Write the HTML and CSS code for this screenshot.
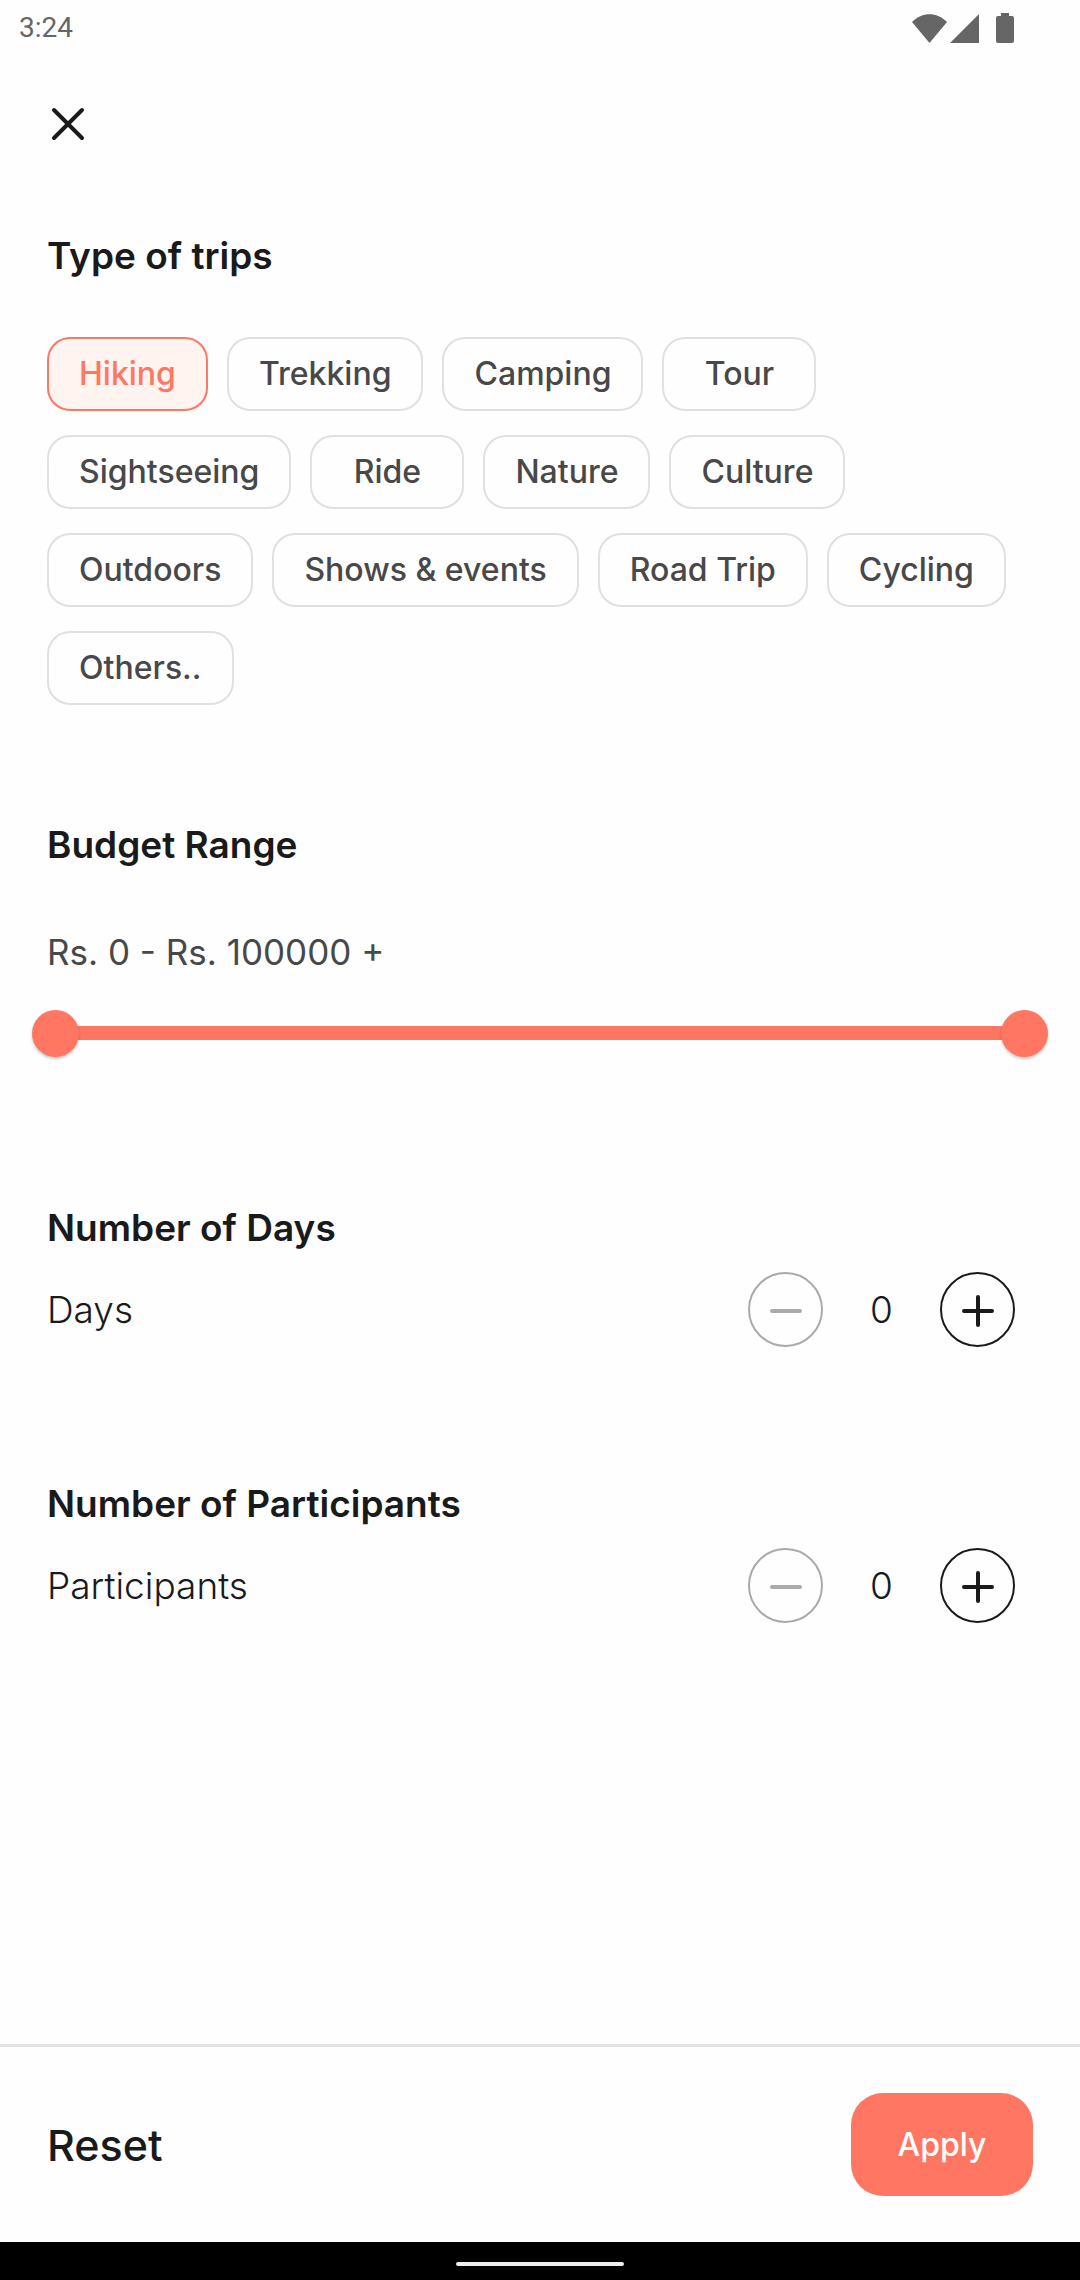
FILE: index.html
```html
<!DOCTYPE html>
<html lang="en">
<head>
<meta charset="utf-8">
<meta name="viewport" content="width=device-width, initial-scale=1">
<title>Trip filters</title>
<link rel="stylesheet" href="styles.css">
</head>
<body>
<div class="screen">
  <div class="status-bar">
    <span class="clock">3:24</span>
    <div class="status-icons">
      <svg class="wifi" width="35" height="29" viewBox="0 0 35 29" aria-hidden="true"><path d="M0 8C10-2.500 25-2.500 35 8L17.500 29z"/></svg>
      <svg class="signal" width="29" height="29" viewBox="0 0 29 29" aria-hidden="true"><path d="M29 0v29H0z"/></svg>
      <svg class="battery" width="18" height="30" viewBox="0 0 18 30" aria-hidden="true"><path d="M5 0h8v3h3a2 2 0 0 1 2 2v23a2 2 0 0 1-2 2H2a2 2 0 0 1-2-2V5a2 2 0 0 1 2-2h3z"/></svg>
    </div>
  </div>

  <header class="top-bar">
    <button class="close" type="button" aria-label="Close">
      <svg width="42" height="42" viewBox="0 0 42 42" aria-hidden="true"><path d="M7 7l28 28M35 7L7 35"/></svg>
    </button>
  </header>

  <main class="filters">
    <section class="group trips">
      <h2 class="title">Type of trips</h2>
      <div class="chips">
        <button class="chip selected" type="button" aria-pressed="true">Hiking</button>
        <button class="chip" type="button" aria-pressed="false">Trekking</button>
        <button class="chip" type="button" aria-pressed="false">Camping</button>
        <button class="chip" type="button" aria-pressed="false">Tour</button>
        <button class="chip" type="button" aria-pressed="false">Sightseeing</button>
        <button class="chip" type="button" aria-pressed="false">Ride</button>
        <button class="chip" type="button" aria-pressed="false">Nature</button>
        <button class="chip" type="button" aria-pressed="false">Culture</button>
        <button class="chip" type="button" aria-pressed="false">Outdoors</button>
        <button class="chip" type="button" aria-pressed="false">Shows &amp; events</button>
        <button class="chip" type="button" aria-pressed="false">Road Trip</button>
        <button class="chip" type="button" aria-pressed="false">Cycling</button>
        <button class="chip" type="button" aria-pressed="false">Others..</button>
      </div>
    </section>

    <section class="group budget">
      <h2 class="title">Budget Range</h2>
      <p class="range-text">Rs. 0 - Rs. 100000 +</p>
      <div class="range">
        <input class="handle" type="range" min="0" max="100000" value="0" aria-label="Minimum budget">
        <input class="handle" type="range" min="0" max="100000" value="100000" aria-label="Maximum budget">
      </div>
    </section>

    <section class="group count">
      <h2 class="title">Number of Days</h2>
      <div class="count-row">
        <span class="count-label" id="days-label">Days</span>
        <div class="stepper" role="group" aria-labelledby="days-label">
          <button class="step" type="button" aria-label="Fewer days" disabled><svg width="36" height="36" viewBox="0 0 36 36" aria-hidden="true"><path d="M4 19h28"/></svg></button>
          <output class="value">0</output>
          <button class="step" type="button" aria-label="More days"><svg width="36" height="36" viewBox="0 0 36 36" aria-hidden="true"><path d="M4 19h28M18 5v28"/></svg></button>
        </div>
      </div>
    </section>

    <section class="group count">
      <h2 class="title">Number of Participants</h2>
      <div class="count-row">
        <span class="count-label" id="people-label">Participants</span>
        <div class="stepper" role="group" aria-labelledby="people-label">
          <button class="step" type="button" aria-label="Fewer participants" disabled><svg width="36" height="36" viewBox="0 0 36 36" aria-hidden="true"><path d="M4 19h28"/></svg></button>
          <output class="value">0</output>
          <button class="step" type="button" aria-label="More participants"><svg width="36" height="36" viewBox="0 0 36 36" aria-hidden="true"><path d="M4 19h28M18 5v28"/></svg></button>
        </div>
      </div>
    </section>
  </main>

  <footer class="actions">
    <button class="reset" type="button">Reset</button>
    <button class="apply" type="button">Apply</button>
  </footer>
  <div class="nav-bar"><span class="nav-pill"></span></div>
</div>
</body>
</html>
```
FILE: styles.css
```css
:root {
  --coral: #ff7762;
  --ink: #1a1a1a;
  --text: #484848;
  --line: #e0e0e0;
  --edge: 47px;
}

* {
  box-sizing: border-box;
}

body {
  margin: 0;
  background: #fefefe;
  color: var(--ink);
  font-family: Inter, "Liberation Sans", sans-serif;
}

button {
  margin: 0;
  padding: 0;
  border: 0;
  background: none;
  color: inherit;
  font: inherit;
  cursor: pointer;
}

.screen {
  display: flex;
  flex-direction: column;
  min-height: 100vh;
}

/* System status bar */
.status-bar {
  display: flex;
  align-items: center;
  justify-content: space-between;
  height: 56px;
  padding: 0 66px 0 19px;
}

.clock {
  color: #666;
  font: 400 28px/32px Roboto, sans-serif;
}

.status-icons {
  display: flex;
  align-items: center;
  fill: #666;
}

.signal {
  margin: 0 17px 0 3px;
}

/* Header */
.top-bar {
  padding: 47px var(--edge) 0;
}

.close {
  display: block;
  width: 42px;
  height: 42px;
}

.close svg {
  display: block;
  fill: none;
  stroke: var(--ink);
  stroke-width: 4;
  stroke-linecap: round;
}

/* Filter groups */
.filters {
  flex: 1;
  padding: 87px var(--edge) 64px;
}

.title {
  margin: 0;
  font-size: 37px;
  font-weight: 600;
  line-height: 48px;
}

.chips {
  display: flex;
  flex-wrap: wrap;
  gap: 24px 19px;
  margin-top: 57px;
}

.chip {
  min-width: 154px;
  height: 74px;
  padding: 0 30px;
  border: 2px solid var(--line);
  border-radius: 23px;
  color: var(--text);
  font-size: 32px;
  font-weight: 500;
  line-height: 40px;
}

.chip.selected {
  border-color: var(--coral);
  background: #fff4ef;
  color: var(--coral);
}

.budget {
  margin-top: 116px;
}

.range-text {
  margin: 59px 0 33px;
  color: var(--text);
  font-size: 35px;
  line-height: 48px;
}

/* Two stacked inputs share one track; only the handles take the pointer */
.range {
  display: grid;
  margin: 0 -15px;
  background: linear-gradient(var(--coral), var(--coral)) center / calc(100% - 48px) 14px no-repeat;
}

.handle {
  grid-area: 1 / 1;
  width: 100%;
  height: 48px;
  margin: 0;
  background: none;
  appearance: none;
  pointer-events: none;
}

.handle::-webkit-slider-thumb {
  width: 47px;
  height: 47px;
  border: 0;
  border-radius: 50%;
  background: var(--coral);
  box-shadow: 0 2px 3px rgba(0, 0, 0, 0.22);
  appearance: none;
  pointer-events: auto;
}

.budget + .count {
  margin-top: 147px;
}

.count + .count {
  margin-top: 133px;
}

.count-row {
  display: flex;
  align-items: center;
  justify-content: space-between;
  margin-top: 20px;
  padding-right: 18px;
}

.count-label,
.value {
  font-size: 37px;
  font-weight: 300;
  line-height: 48px;
}

.stepper {
  display: flex;
  align-items: center;
}

.step {
  display: grid;
  place-items: center;
  width: 75px;
  height: 75px;
  border: 2px solid var(--ink);
  border-radius: 50%;
}

.step svg {
  fill: none;
  stroke: var(--ink);
  stroke-width: 4;
  stroke-linecap: round;
}

.step:disabled {
  border-color: #aaa;
  cursor: default;
}

.step:disabled svg {
  stroke: #aaa;
}

.value {
  width: 117px;
  text-align: center;
}

/* Bottom actions */
.actions {
  display: flex;
  align-items: center;
  justify-content: space-between;
  padding: 46px var(--edge);
  border-top: 3px solid #e4e4e4;
}

.reset {
  font-size: 43px;
  font-weight: 500;
  line-height: 52px;
}

.apply {
  min-width: 182px;
  height: 103px;
  border-radius: 32px;
  background: var(--coral);
  color: #fff;
  font-size: 32px;
  font-weight: 500;
}

.nav-bar {
  display: grid;
  place-items: center;
  height: 38px;
  padding-top: 6px;
  background: #000;
}

.nav-pill {
  width: 168px;
  height: 4px;
  border-radius: 2px;
  background: #ececec;
}
```
